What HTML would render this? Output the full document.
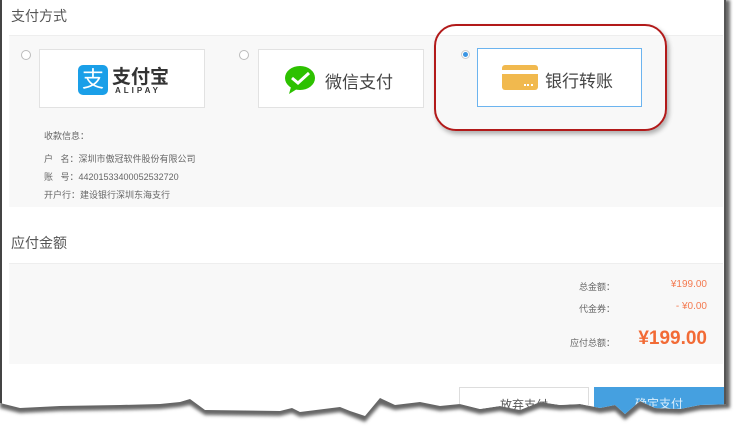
<!DOCTYPE html>
<html><head><meta charset="utf-8"><style>
*{margin:0;padding:0;box-sizing:border-box}
body{width:737px;height:433px;background:#fff;position:relative;overflow:hidden;font-family:"Liberation Sans","Noto Sans CJK SC",sans-serif;color:#555}
.wrap{position:absolute;left:0;top:0;width:737px;height:433px;clip-path:polygon(0 403px,20px 408px,60px 406px,120px 405px,160px 404px,180px 402px,190px 399px,205px 410px,280px 411px,292px 408px,300px 412px,340px 407px,350px 411px,365px 416px,380px 398px,395px 405px,420px 402px,440px 406px,460px 404px,480px 409px,500px 406px,520px 410px,540px 402px,560px 405px,580px 404px,600px 408px,615px 405px,625px 414px,640px 401px,655px 408px,680px 409px,700px 405px,737px 404px,737px 0,0 0)}
.frame{position:absolute;left:0;top:0;width:726px;height:433px;border-left:2px solid #444;border-right:2px solid #555;background:#fff}
.abs{position:absolute}
.h{font-size:14px;color:#555}
.panel{background:#f8f8f8;border-top:1px solid #eee}
.card{background:#fff;border:1px solid #e2e2e2;position:absolute}
.radio{position:absolute;width:10px;height:10px;border:1px solid #bbb;border-radius:50%;background:#fff}
.info{font-size:9px;color:#666;position:absolute}
.lbl{font-size:9px;color:#666;position:absolute;text-align:right}
.val{position:absolute;right:16px;color:#f47a50;font-size:10px}
</style></head><body>
<svg class="abs" style="left:0;top:0" width="737" height="433"><defs><filter id="b"><feGaussianBlur stdDeviation="1.5"/></filter></defs>
<polygon filter="url(#b)" fill="#666" points="0,0 730,0 730,408 700,410 680,414 655,413 640,408 625,420 615,411 600,413 580,409 560,410 540,408 520,415 500,411 480,414 460,409 440,411 420,407 395,410 380,405 365,422 350,416 340,412 300,417 292,413 280,416 205,415 190,405 180,407 160,409 120,410 60,411 20,413 0,408"/></svg>
<div class="wrap">
<div class="frame">
<div class="abs h" style="left:9px;top:6px">支付方式</div>
<div class="abs panel" style="left:7px;top:35px;width:714px;height:172px">
 <div class="radio" style="left:12px;top:14px"></div>
 <div class="card" style="left:30px;top:13px;width:166px;height:59px">
  <div class="abs" style="left:38px;top:15px;width:30px;height:30px;background:#1a9fe8;border-radius:5px;color:#fff;font-size:22px;line-height:30px;text-align:center">支</div>
  <div class="abs" style="left:72px;top:12px;font-size:19px;font-weight:bold;color:#333">支付宝</div>
  <div class="abs" style="left:75px;top:36px;font-size:8px;font-weight:bold;color:#333;letter-spacing:3px">ALIPAY</div>
 </div>
 <div class="radio" style="left:230px;top:14px"></div>
 <div class="card" style="left:249px;top:13px;width:166px;height:59px">
  <svg class="abs" style="left:25px;top:15px" width="34" height="31" viewBox="0 0 34 31"><ellipse cx="16" cy="13" rx="15" ry="12" fill="#2dc100"/><path d="M7 22 L5 29 L13 24Z" fill="#2dc100"/><path d="M8 13 L14 18 L25 8" stroke="#fff" stroke-width="3" fill="none"/></svg>
  <div class="abs" style="left:66px;top:18px;font-size:17px;color:#444">微信支付</div>
 </div>
 <div class="abs" style="left:452px;top:14px;width:9px;height:9px;border-radius:50%;border:1px solid #ccc;background:#fff"><div style="width:5px;height:5px;margin:1px;border-radius:50%;background:#3b95e3"></div></div>
 <div class="card" style="left:468px;top:12px;width:165px;height:59px;border-color:#6cb4ef">
  <div class="abs" style="left:24px;top:16px;width:36px;height:25px;background:#f1b94e;border-radius:3px"><div style="margin-top:5px;height:4px;background:#fff"></div><div style="position:absolute;right:5px;bottom:4px;width:9px;border-top:2px dotted #fff"></div></div>
  <div class="abs" style="left:67px;top:18px;font-size:17px;color:#444">银行转账</div>
 </div>
 <div class="info" style="top:93px;left:35px">收款信息：</div>
 <div class="info" style="top:116px;left:35px">户&nbsp;&nbsp;&nbsp;名：深圳市傲冠软件股份有限公司</div>
 <div class="info" style="top:134px;left:35px">账&nbsp;&nbsp;&nbsp;号：44201533400052532720</div>
 <div class="info" style="top:152px;left:35px">开户行：建设银行深圳东海支行</div>
</div>
<div class="abs" style="left:432px;top:24px;width:233px;height:107px;border:2px solid #b21a1a;border-radius:22px;box-shadow:2px 3px 5px rgba(0,0,0,.3)"></div>
<div class="abs h" style="left:9px;top:233px">应付金额</div>
<div class="abs panel" style="left:7px;top:263px;width:714px;height:101px">
 <div class="lbl" style="left:540px;top:16px;width:66px">总金额：</div><div class="val" style="top:15px">¥199.00</div>
 <div class="lbl" style="left:540px;top:38px;width:66px">代金券：</div><div class="val" style="top:37px">- ¥0.00</div>
 <div class="lbl" style="left:540px;top:72px;width:66px">应付总额：</div><div class="val" style="top:64px;font-size:19px;font-weight:bold;color:#f26b36">¥199.00</div>
</div>
<div class="abs" style="left:457px;top:387px;width:130px;height:50px;border:1px solid #ddd;background:#fff;font-size:12px;color:#555;text-align:center;padding-top:8px">放弃支付</div>
<div class="abs" style="left:592px;top:387px;width:130px;height:50px;background:#45a0e0;font-size:12px;color:#dbeefb;text-align:center;padding-top:8px">确定支付</div>
</div>
</div>
</body></html>
